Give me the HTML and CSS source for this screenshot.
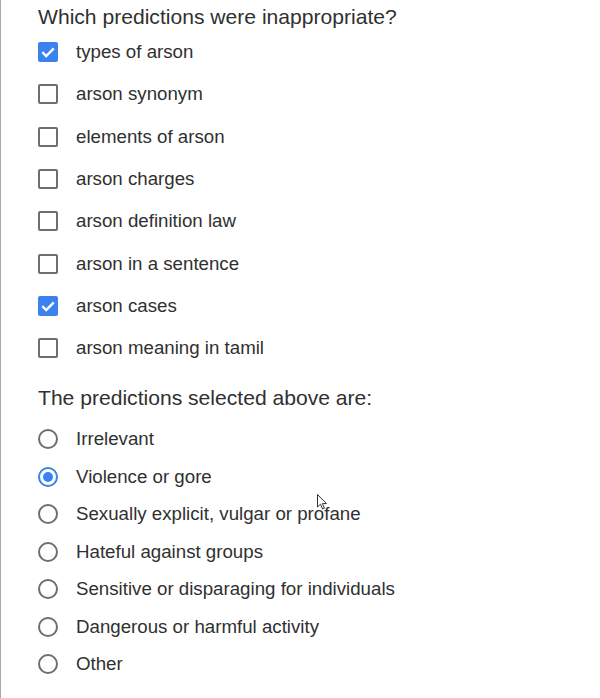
FILE: index.html
```html
<!DOCTYPE html>
<html>
<head>
<meta charset="utf-8">
<link rel="stylesheet" href="styles.css">
</head>
<body>
<div class="page">
  <h2 class="q">Which predictions were inappropriate?</h2>
  <ul class="checks">
    <li class="row"><span class="cb on"><svg viewBox="0 0 20 20" width="20" height="20"><path d="M4.3 10.2 L8.2 14.1 L15.8 6.4" fill="none" stroke="#fff" stroke-width="2.4"/></svg></span><span class="lbl">types of arson</span></li>
    <li class="row"><span class="cb"></span><span class="lbl">arson synonym</span></li>
    <li class="row"><span class="cb"></span><span class="lbl">elements of arson</span></li>
    <li class="row"><span class="cb"></span><span class="lbl">arson charges</span></li>
    <li class="row"><span class="cb"></span><span class="lbl">arson definition law</span></li>
    <li class="row"><span class="cb"></span><span class="lbl">arson in a sentence</span></li>
    <li class="row"><span class="cb on"><svg viewBox="0 0 20 20" width="20" height="20"><path d="M4.3 10.2 L8.2 14.1 L15.8 6.4" fill="none" stroke="#fff" stroke-width="2.4"/></svg></span><span class="lbl">arson cases</span></li>
    <li class="row"><span class="cb"></span><span class="lbl">arson meaning in tamil</span></li>
  </ul>
  <h2 class="q q2">The predictions selected above are:</h2>
  <ul class="radios">
    <li class="rrow"><span class="rb"></span><span class="lbl">Irrelevant</span></li>
    <li class="rrow"><span class="rb on"></span><span class="lbl">Violence or gore</span></li>
    <li class="rrow"><span class="rb"></span><span class="lbl">Sexually explicit, vulgar or profane</span></li>
    <li class="rrow"><span class="rb"></span><span class="lbl">Hateful against groups</span></li>
    <li class="rrow"><span class="rb"></span><span class="lbl">Sensitive or disparaging for individuals</span></li>
    <li class="rrow"><span class="rb"></span><span class="lbl">Dangerous or harmful activity</span></li>
    <li class="rrow"><span class="rb"></span><span class="lbl">Other</span></li>
  </ul>
  <svg class="cursor" width="12" height="18" viewBox="0 0 12 18"><path d="M0.5 0.5 L0.5 13 L3.5 10.2 L5.6 15 L7.4 14.2 L5.4 9.6 L9.5 9.6 Z" fill="#fff" stroke="#333" stroke-width="1"/></svg>
</div>
</body>
</html>
```
FILE: styles.css
```css
html, body {
  margin: 0;
  padding: 0;
  background: #ffffff;
}
body {
  font-family: "Liberation Sans", Arial, sans-serif;
  color: #303030;
}
.page {
  position: relative;
  height: 698px;
  box-sizing: border-box;
  border-left: 1px solid #a8a8a8;
  padding: 4px 0 0 37px;
}
.q {
  margin: 0;
  font-size: 21.1px;
  font-weight: 400;
  line-height: 26px;
  color: #303030;
}
.q2 {
  margin-top: 16px;
}
ul {
  list-style: none;
  margin: 0;
  padding: 0;
}
.checks {
  margin-top: 1px;
}
.row {
  display: flex;
  align-items: center;
  height: 42.3px;
}
.rrow {
  display: flex;
  align-items: center;
  height: 37.5px;
}
.radios {
  margin-top: 9px;
}
.lbl {
  font-size: 18.7px;
  color: #303030;
  margin-left: 18px;
}
.cb {
  box-sizing: border-box;
  width: 20px;
  height: 20px;
  border: 2px solid #6e6e6e;
  border-radius: 2px;
  display: flex;
  align-items: center;
  justify-content: center;
}
.cb.on {
  background: #3b82f0;
  border: none;
}
.rb {
  box-sizing: border-box;
  width: 20px;
  height: 20px;
  border: 2px solid #6e6e6e;
  border-radius: 50%;
  display: flex;
  align-items: center;
  justify-content: center;
}
.rb.on {
  border-color: #3b82f0;
}
.rb.on::after {
  content: "";
  width: 10px;
  height: 10px;
  border-radius: 50%;
  background: #3b82f0;
}
.cursor {
  position: absolute;
  left: 316px;
  top: 494px;
}
```
